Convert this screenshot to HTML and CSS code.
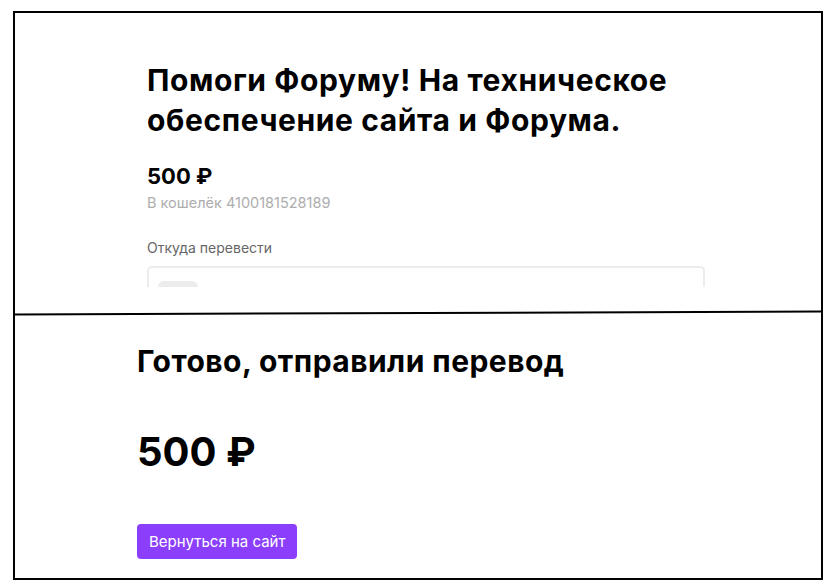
FILE: index.html
```html
<!DOCTYPE html>
<html lang="ru">

<head>
    <meta charset="UTF-8">
    <meta name="viewport" content="width=device-width, initial-scale=1.0">
    <title>Перевод</title>
    <link rel="stylesheet" href="styles.css">
</head>

<body>

    <div class="frame">
        <!-- первый экран: форма перевода, обрезана снизу -->
        <div class="shot shot-form">
            <div class="viewport">
                <h1 class="title">Помоги Форуму! На техническое обеспечение сайта и Форума.</h1>
                <div class="sum">500 ₽</div>
                <div class="wallet">В кошелёк 4100181528189</div>
                <div class="label">Откуда перевести</div>
                <div class="source">
                    <span class="pill"></span>
                </div>
            </div>
        </div>

        <div class="divider"></div>

        <!-- второй экран: готово -->
        <div class="shot shot-done">
            <h2 class="done-title">Готово, отправили перевод</h2>
            <div class="done-sum">500 ₽</div>
            <button class="back">Вернуться на сайт</button>
        </div>
    </div>

</body>

</html>
```

FILE: styles.css
```css
html,
body {
    margin: 0;
    padding: 0;
    background: #fff;
    font-family: Inter, "Noto Sans", sans-serif;
    color: #000;
}

.frame {
    margin: 11px 0 0 13px;
    width: 806px;
    height: 565px;
    border: 2px solid #000;
}

.shot-form {
    height: 299px;
}

.viewport {
    height: 274px;
    overflow: hidden;
    padding-left: 132px;
    padding-right: 116px;
}

.title {
    margin: 0;
    padding-top: 47px;
    font-size: 30px;
    line-height: 40px;
    font-weight: 700;
    letter-spacing: 0.6px;
    width: 560px;
}

.sum {
    margin-top: 22px;
    font-size: 22px;
    font-weight: 700;
    line-height: 28px;
}

.wallet {
    margin-top: 3px;
    font-size: 14.5px;
    color: #adadad;
    line-height: 20px;
}

.label {
    margin-top: 25px;
    font-size: 14px;
    color: #666;
    line-height: 20px;
}

.source {
    margin-top: 8px;
    height: 60px;
    border: 2px solid #ececec;
    border-radius: 5px;
    padding: 13px 9px;
}

.pill {
    display: block;
    width: 40px;
    height: 30px;
    border-radius: 6px;
    background: #ececec;
}

.divider {
    height: 2px;
    background: #000;
    transform: rotate(-0.2deg);
}

.shot-done {
    padding-left: 122px;
}

.done-title {
    margin: 0;
    padding-top: 28px;
    font-size: 30px;
    line-height: 38px;
    font-weight: 700;
    letter-spacing: 0.45px;
}

.done-sum {
    margin-top: 47px;
    font-size: 40px;
    font-weight: 700;
    line-height: 50px;
}

.back {
    margin-top: 47px;
    height: 35px;
    padding: 0 12px;
    border: 0;
    border-radius: 4px;
    background: #8b3ffd;
    color: #fff;
    font-family: inherit;
    font-size: 15px;
}
```
